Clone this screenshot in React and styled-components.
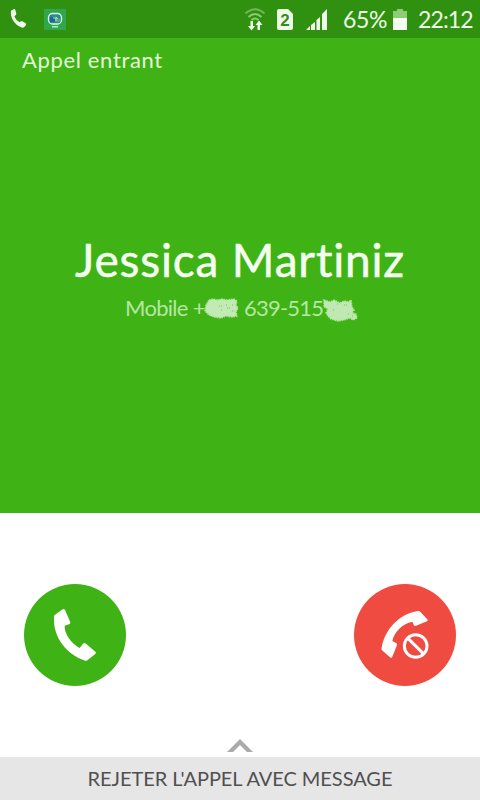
import React from 'react';
import styled, { createGlobalStyle } from 'styled-components';

const GlobalStyle = createGlobalStyle`
* {
    box-sizing: border-box;
}
body {
    margin: 0;
    background: #fff;
    font-family: Lato, "Open Sans", sans-serif;
}
`;

export const Screen = styled.div`
display: flex;
flex-direction: column;
width: 480px;
height: 800px;
overflow: hidden;
background: #fff;
`;

export const StatusBar = styled.div`
display: flex;
align-items: center;
height: 38px;
flex: none;
background: #309110;
padding: 0 7px 0 8px;
`;

export const StatusIcon = styled.svg`
display: block;
flex: none;
width: ${({ $width }) => $width}px;
height: ${({ $height }) => $height}px;
margin-left: ${({ $gap }) => $gap || 0}px;
`;

export const StatusText = styled.span`
color: #effbe9;
font-size: 23px;
line-height: 38px;
white-space: nowrap;
width: ${({ $width }) => $width}px;
letter-spacing: ${({ $spacing }) => $spacing}px;
margin-left: ${({ $gap }) => $gap}px;
`;

export const Spacer = styled.div`
flex: 1;
`;

export const CallerPanel = styled.div`
height: 475px;
flex: none;
background: #3fb216;
display: flex;
flex-direction: column;
`;

export const CallState = styled.div`
color: #e2f7d7;
font-size: 22px;
line-height: 28px;
letter-spacing: 0.65px;
padding: 8px 0 0 22px;
`;

export const CallerName = styled.div`
color: #f4fff0;
font-size: 46px;
line-height: 56px;
letter-spacing: 0.8px;
text-align: center;
white-space: nowrap;
-webkit-text-stroke: 0.5px #f4fff0;
margin-top: 158px;
`;

export const NumberRow = styled.div`
display: flex;
align-items: center;
height: 30px;
margin-top: 6px;
padding-left: 125px;
`;

export const NumberText = styled.span`
color: #b5e7a1;
font-size: 22px;
line-height: 28px;
padding-bottom: 2px;
white-space: pre;
flex: none;
width: ${({ $width }) => $width}px;
letter-spacing: ${({ $spacing }) => $spacing}px;
margin-left: ${({ $gap }) => $gap || 0}px;
`;

export const Smudge = styled.svg`
display: block;
flex: none;
width: 35px;
height: 26px;
`;

export const Actions = styled.div`
display: flex;
justify-content: space-between;
padding: 71px 24px 0;
height: 227px;
`;

export const RoundButton = styled.button`
width: 102px;
height: 102px;
padding: 0;
border: 0;
border-radius: 50%;
background: ${({ $color }) => $color};
`;

export const ButtonIcon = styled.svg`
display: block;
width: 102px;
height: 102px;
`;

export const Handle = styled.div`
display: flex;
justify-content: center;
height: 18px;
`;

export const Chevron = styled.svg`
display: block;
width: 26px;
height: 13px;
`;

export const RejectBar = styled.div`
flex: 1;
background: #e6e6e6;
color: #505050;
font-size: 20px;
line-height: 43px;
letter-spacing: -0.05px;
text-align: center;
white-space: nowrap;
`;

const App = () => {
    return (
        <>
            <GlobalStyle />
            <Screen>
                <StatusBar>
                    <StatusIcon $width={20} $height={22} viewBox="24 26 60 66">
                        <path fill="#f0fbeb" d="M33 34 L42 29 Q45 28 46 32 L49 43 Q49 46 45 49 L43 51 Q47 63 59 69 L62 66 Q64 65 67 66 L77 72 Q80 74 78 77 L73 83 Q70 87 63 84 C43 75 30 54 33 34Z" />
                    </StatusIcon>
                    <StatusIcon $gap={16} $width={22} $height={21} viewBox="0 0 22 21">
                        <rect width="22" height="21" fill="#32a64b" />
                        <rect x="4.5" y="4.5" width="13" height="10.5" rx="4" fill="#32888f" stroke="#d7fbe5" strokeWidth="1.3" />
                        <path d="M6 8h5v5H6z" fill="#21669b" />
                        <path d="M11 5l1 4 4 1v3h-5z" fill="#4baf75" />
                        <path d="M9 9h3v3M12 8l2 2" fill="none" stroke="#a4e4cf" />
                        <rect x="8" y="17" width="6" height="1.5" fill="#b1edbf" />
                    </StatusIcon>
                    <Spacer />
                    <StatusIcon $width={22} $height={24} viewBox="0 0 22 24">
                        <g fill="none" stroke="#8acb70" strokeWidth="2">
                            <path d="M1.5 6.500Q11-2 20.500 6.500" stroke="#6fb957" />
                            <path d="M4.500 10Q11 4 17.500 10" />
                            <path d="M7.500 13Q11 10 14.500 13" />
                        </g>
                        <path fill="#effbe9" d="M6.500 14h2.500v5h2l-3.500 4.500L4 19h2.500zM13.500 23H16v-5h2.500L15 13.500 11.500 18h2z" />
                    </StatusIcon>
                    <StatusIcon $gap={11} $width={16} $height={21} viewBox="0 0 16 21">
                        <path d="M2 0h9l5 5v14q0 2-2 2H2q-2 0-2-2V2q0-2 2-2Z" fill="#effbe9" />
                        <text x="8" y="16.500" textAnchor="middle" fontFamily="Liberation Sans, sans-serif" fontSize="17" fontWeight="700" fill="#398b1e">2</text>
                    </StatusIcon>
                    <StatusIcon $gap={13} $width={21} $height={21} viewBox="0 0 21 21">
                        <path fill="#effbe9" d="M0 21l4-4v4zM5 16l4-3v8H5zM10.500 11l3.500-3v13h-3.500zM16 5l5-5v21h-5z" />
                    </StatusIcon>
                    <StatusText $gap={16} $width={45} $spacing={-0.4}>65%</StatusText>
                    <StatusIcon $gap={5} $width={14} $height={21} viewBox="0 0 14 21">
                        <path fill="#8dcb75" d="M4 0h6v2h4v7H0V2h4z" />
                        <path fill="#f4fff0" d="M0 9h14v12H0z" />
                    </StatusIcon>
                    <StatusText $gap={11} $width={55} $spacing={-0.9}>22:12</StatusText>
                </StatusBar>

                <CallerPanel>
                    <CallState>Appel entrant</CallState>
                    <CallerName>Jessica Martiniz</CallerName>
                    <NumberRow>
                        <NumberText $width={79} $spacing={-0.7}>Mobile +</NumberText>
                        <Smudge viewBox="0 0 35 26">
                            <path d="M5 4L9 3L13 4L18 3L23 4L30 3L33 5L32 9L34 12L32 16L33 20L28 21L22 20L17 22L10 21L5 19L1 15L2 9Z" fill="#c3e9b5" stroke="#b0e29b" strokeWidth="1.500" strokeDasharray="1.500 1" />
                            <path d="M15 10h3M22 9h2M28 9h2M17 14h2M23 12h3M28 15h2" stroke="#76c35b" strokeWidth="1" strokeDasharray="1 1" />
                        </Smudge>
                        <NumberText $gap={5} $width={79} $spacing={-0.8}>639-515</NumberText>
                        <Smudge viewBox="0 0 35 26">
                            <path d="M1 4L7 6L11 4L17 7L21 5L26 6L28 4L29 11L31 14L29 17L33 18L34 22L30 24L27 22L21 24L15 25L8 23L5 20L3 17L5 13L1 11Z" fill="#c0e8b2" stroke="#b3e39f" strokeWidth="1.500" strokeDasharray="1.500 1" />
                            <path d="M14 8h2M21 9h3M10 14h1M29 20h2M25 18h2" stroke="#76c35b" strokeDasharray="1 1" />
                        </Smudge>
                    </NumberRow>
                </CallerPanel>

                <Actions>
                    <RoundButton $color="#3fb216" aria-label="Répondre">
                        <ButtonIcon viewBox="42 42 306 306">
                            <path fill="#fff" d="M133 136 L158 118 Q162 115 165 120 L181 157 Q182 162 177 163 L164 167 C162 188 182 219 209 234 L219 221 Q222 217 226 220 L256 245 Q260 248 256 252 L232 271 Q228 274 222 271 C170 253 129 203 132 142 Z" />
                        </ButtonIcon>
                    </RoundButton>
                    <RoundButton $color="#ef4b40" aria-label="Rejeter">
                        <ButtonIcon viewBox="42 42 306 306">
                            <path fill="#fff" d="M125 233 C134 180 176 132 233 123 Q239 122 242 127 L262 148 Q265 151 261 154 L228 167 Q223 169 221 164 L217 155 C188 160 162 186 157 213 L168 219 Q173 221 171 225 L157 260 Q155 266 150 262 L126 241 Q123 238 125 233Z" />
                            <circle cx="227" cy="228" r="43" fill="#ef4b40" />
                            <circle cx="227" cy="228" r="34" fill="none" stroke="#fff" strokeWidth="9" />
                            <path d="M204 205L250 251" stroke="#fff" strokeWidth="9" />
                        </ButtonIcon>
                    </RoundButton>
                </Actions>

                <Handle>
                    <Chevron viewBox="0 0 26 13">
                        <path d="M0 13L13 0L26 13H20L13 6L6 13Z" fill="#aaa" />
                    </Chevron>
                </Handle>
                <RejectBar>REJETER L'APPEL AVEC MESSAGE</RejectBar>
            </Screen>
        </>
    )
}

export default App
